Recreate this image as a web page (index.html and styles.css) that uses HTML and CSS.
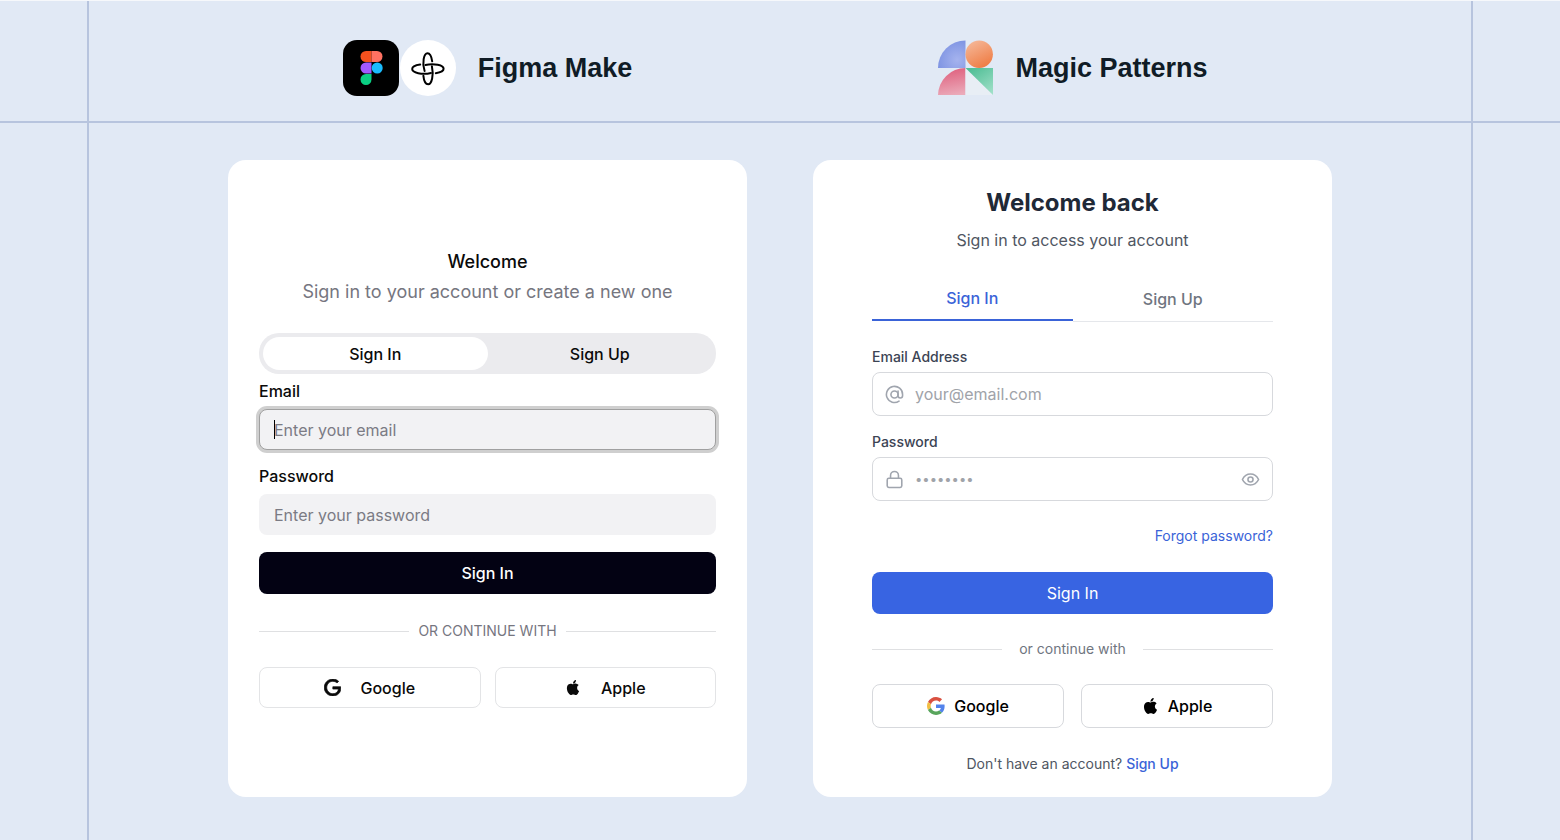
FILE: index.html
```html
<!DOCTYPE html>
<html lang="en">
<head>
<meta charset="utf-8">
<meta name="viewport" content="width=device-width, initial-scale=1">
<title>Figma Make and Magic Patterns</title>
<link rel="stylesheet" href="styles.css">
</head>
<body>
<svg class="sprite" aria-hidden="true">
  <symbol id="apple" viewBox="0 0 24 24"><path fill="currentColor" d="M12.152 6.896c-.948 0-2.415-1.078-3.96-1.04-2.04.027-3.91 1.183-4.961 3.014-2.117 3.675-.546 9.103 1.519 12.09 1.013 1.454 2.208 3.09 3.792 3.039 1.52-.065 2.09-.987 3.935-.987 1.831 0 2.35.987 3.96.948 1.637-.026 2.676-1.48 3.676-2.948 1.156-1.688 1.636-3.325 1.662-3.415-.039-.013-3.182-1.221-3.22-4.857-.026-3.04 2.48-4.494 2.597-4.559-1.429-2.09-3.623-2.324-4.39-2.376-2-.156-3.675 1.09-4.61 1.09zM15.53 3.83c.843-1.012 1.4-2.427 1.245-3.83-1.207.052-2.662.805-3.532 1.818-.78.896-1.454 2.338-1.273 3.714 1.338.104 2.715-.688 3.559-1.701"/></symbol>
</svg>
<header class="band band-top">
  <div class="band-inner">
    <div class="columns">
      <div class="brand">
        <div class="brand-pair">
          <svg class="brand-logo" viewBox="0 0 56 56" aria-hidden="true">
            <rect width="56" height="56" rx="14" fill="#000"/>
            <path d="M23 11h5.500v11H23a5.500 5.500 0 0 1 0-11z" fill="#f4511e"/>
            <path d="M28.500 11H34a5.500 5.500 0 0 1 0 11h-5.500z" fill="#ff7262"/>
            <path d="M23 22.500h5.500v11H23a5.500 5.500 0 0 1 0-11z" fill="#a259ff"/>
            <circle cx="34.200" cy="28" r="5.500" fill="#1abcfe"/>
            <path d="M23 34h5.500v5.500A5.500 5.500 0 1 1 23 34z" fill="#0acf83"/>
          </svg>
          <svg class="brand-logo" viewBox="0 0 56 56" aria-hidden="true">
            <circle cx="28" cy="28" r="28" fill="#fff"/>
            <g fill="none" stroke="#000" stroke-width="2" stroke-linecap="round">
              <path d="M24.600 31C21.800 23 23.900 13.300 27.500 13.300c2.300 0 4 3.400 4.700 8"/>
              <path d="M25.400 25C34 22.900 43.600 25.300 43.600 28.800c0 2.200-3 3.700-7.800 4.400"/>
              <path d="M31.900 26.200c1.900 8.600 0 18-3.800 18-2.400 0-4.200-3.500-4.700-8.400"/>
              <path d="M31 33C22 35.200 12.200 32.700 12.200 29c0-2.200 3.200-3.700 8-4.400"/>
            </g>
          </svg>
        </div>
        <h2 class="brand-name">Figma Make</h2>
      </div>
      <div class="brand">
        <svg class="brand-logo" viewBox="0 0 56 56" aria-hidden="true">
          <defs>
            <radialGradient id="mp-blue" cx=".7" cy=".7" r=".9"><stop offset="0" stop-color="#a5b3ee"/><stop offset="1" stop-color="#768de0"/></radialGradient>
            <linearGradient id="mp-orange" x1=".2" y1="0" x2=".7" y2="1"><stop offset="0" stop-color="#f5b899"/><stop offset="1" stop-color="#ef7b42"/></linearGradient>
            <linearGradient id="mp-red" x1=".5" y1="0" x2=".7" y2="1"><stop offset="0" stop-color="#df607e"/><stop offset="1" stop-color="#ebabba"/></linearGradient>
            <linearGradient id="mp-green" x1=".3" y1="0" x2="1" y2="1"><stop offset="0" stop-color="#52bf97"/><stop offset="1" stop-color="#a5e2cb"/></linearGradient>
          </defs>
          <path d="M1 28A27.500 27.500 0 0 1 28.500 .500v27.500z" fill="url(#mp-blue)"/>
          <circle cx="42.200" cy="14.200" r="13.700" fill="url(#mp-orange)"/>
          <path d="M1 55a27.500 27.500 0 0 1 27.500-27V55z" fill="url(#mp-red)"/>
          <path d="M28.500 28v27H56z" fill="#e8eef5"/>
          <path d="M28.500 28H56v27z" fill="url(#mp-green)"/>
        </svg>
        <h2 class="brand-name">Magic Patterns</h2>
      </div>
    </div>
  </div>
</header>
<main class="band band-main">
  <div class="band-inner">
    <div class="columns">
      <section class="card figma">
        <h1 class="title">Welcome</h1>
        <p class="subtitle">Sign in to your account or create a new one</p>
        <div class="tabs">
          <button type="button" class="tab active">Sign In</button>
          <button type="button" class="tab">Sign Up</button>
        </div>
        <form>
          <div class="group">
            <label for="f-email">Email</label>
            <div class="field"><input id="f-email" class="focused" type="email" placeholder="Enter your email"><span class="caret"></span></div>
          </div>
          <div class="group">
            <label for="f-pass">Password</label>
            <div class="field"><input id="f-pass" type="password" placeholder="Enter your password"></div>
          </div>
          <button type="button" class="submit">Sign In</button>
        </form>
        <div class="divider"><span>OR CONTINUE WITH</span></div>
        <div class="socials">
          <button type="button" class="social">
            <svg class="google" viewBox="0 0 24 24" aria-hidden="true"><path fill="#0a0a0a" d="M12.480 10.920v3.280h7.840c-.240 1.840-.853 3.187-1.787 4.133-1.147 1.147-2.933 2.400-6.053 2.400-4.827 0-8.600-3.893-8.600-8.720s3.773-8.720 8.600-8.720c2.600 0 4.507 1.027 5.907 2.347l2.307-2.307C18.747 1.440 16.133 0 12.480 0 5.867 0 .307 5.387.307 12s5.560 12 12.173 12c3.573 0 6.267-1.173 8.373-3.360 2.160-2.160 2.840-5.213 2.840-7.667 0-.760-.053-1.467-.173-2.053z" stroke="#0a0a0a"/></svg>
            Google
          </button>
          <button type="button" class="social"><svg class="apple" aria-hidden="true"><use href="#apple"/></svg>Apple</button>
        </div>
      </section>

      <section class="card magic">
        <h1 class="title">Welcome back</h1>
        <p class="subtitle">Sign in to access your account</p>
        <div class="tabs">
          <button type="button" class="tab active">Sign In</button>
          <button type="button" class="tab">Sign Up</button>
        </div>
        <form>
          <div class="group">
            <label for="m-email">Email Address</label>
            <div class="field">
              <svg class="icon" viewBox="0 0 24 24" aria-hidden="true"><circle cx="12" cy="12" r="4.500"/><path d="M16.500 7.500v6a2.700 2.700 0 0 0 5.700 0V12a10.200 10.200 0 1 0-4.500 8.400"/></svg>
              <input id="m-email" type="email" placeholder="your@email.com">
            </div>
          </div>
          <div class="group">
            <label for="m-pass">Password</label>
            <div class="field">
              <svg class="icon" viewBox="0 0 24 24" aria-hidden="true"><rect x="2.800" y="10.500" width="18.400" height="11.500" rx="2"/><path d="M7 10.500V6.800a5 5 0 0 1 10 0v3.700"/></svg>
              <input id="m-pass" class="dots" type="password" placeholder="••••••••">
              <button type="button" class="reveal" aria-label="Show password"><svg class="icon" viewBox="0 0 24 24" aria-hidden="true"><path d="M1.800 12C4 7.500 7.700 5 12 5s8 2.500 10.200 7c-2.200 4.500-5.900 7-10.200 7s-8-2.500-10.200-7z"/><circle cx="12" cy="12" r="3.200"/></svg></button>
            </div>
          </div>
          <a class="forgot" href="#">Forgot password?</a>
          <button type="button" class="submit">Sign In</button>
        </form>
        <div class="divider"><span>or continue with</span></div>
        <div class="socials">
          <button type="button" class="social">
            <svg class="google" viewBox="0 0 48 48" aria-hidden="true">
              <path fill="#d95040" d="M24 9.500c3.540 0 6.710 1.220 9.210 3.600l6.850-6.850C35.900 2.380 30.470 0 24 0 14.620 0 6.510 5.380 2.560 13.220l7.980 6.190C12.430 13.720 17.740 9.500 24 9.500z"/>
              <path fill="#5383ec" d="M46.980 24.550c0-1.570-.150-3.090-.380-4.550H24v9.020h12.940c-.580 2.960-2.260 5.480-4.780 7.180l7.730 6c4.510-4.180 7.090-10.360 7.090-17.650z"/>
              <path fill="#f2be42" d="M10.530 28.590c-.480-1.450-.760-2.990-.760-4.590s.270-3.140.760-4.590l-7.980-6.190C.920 16.460 0 20.120 0 24s.920 7.540 2.560 10.780l7.970-6.190z"/>
              <path fill="#58a55c" d="M24 48c6.480 0 11.930-2.130 15.890-5.810l-7.730-6c-2.150 1.450-4.920 2.300-8.160 2.300-6.260 0-11.570-4.220-13.470-9.910l-7.980 6.190C6.510 42.620 14.620 48 24 48z"/>
            </svg>
            Google
          </button>
          <button type="button" class="social"><svg class="apple" aria-hidden="true"><use href="#apple"/></svg>Apple</button>
        </div>
        <p class="foot">Don't have an account? <a href="#">Sign Up</a></p>
      </section>
    </div>
  </div>
</main>
</body>
</html>
```
FILE: styles.css
```css
* { box-sizing: border-box; }

body {
  margin: 0;
  min-height: 100vh;
  display: flex;
  flex-direction: column;
  border-top: 1px solid #f6f8fb;
  background: #e1e9f5;
  font-family: Inter, "Liberation Sans", sans-serif;
  font-size: 16px;
  line-height: 20px;
  color: #0a0a0a;
}

h1, h2, p { margin: 0; }
a { color: #3a63d8; text-decoration: none; }
button, input { font: inherit; color: inherit; }
button { padding: 0; border: 0; background: none; cursor: pointer; }
.sprite { display: none; }

/* Page bands with guide lines */
.band { padding: 0 87px; display: flex; }
.band-top { border-bottom: 2px solid #b7c4de; }
.band-main { flex: 1; }
.band-inner {
  flex: 1;
  display: flex;
  justify-content: center;
  border: solid #b7c4de;
  border-width: 0 2px;
  padding: 0 24px;
}
.band-top .band-inner { padding-top: 39px; padding-bottom: 25px; }
.band-main .band-inner { padding-top: 37px; padding-bottom: 43px; }
.columns {
  flex: 1;
  max-width: 1104px;
  display: grid;
  grid-template-columns: 1fr 1fr;
  gap: 66px;
}

.brand { display: flex; align-items: center; justify-content: center; gap: 22px; }
.brand-pair { display: flex; gap: 1px; }
.brand-logo { width: 56px; height: 56px; }
.brand-name {
  font: bold 27px/32px "Liberation Sans", Arial, sans-serif;
  color: #101c26;
}

/* Shared card parts */
.card {
  display: flex;
  flex-direction: column;
  border-radius: 18px;
  background: #fff;
}
.title, .subtitle { text-align: center; }
.tabs { display: grid; grid-template-columns: 1fr 1fr; }
.tab, label, .social { font-weight: 500; }
.group { display: flex; flex-direction: column; }
.field { position: relative; display: flex; align-items: center; }
.field input { flex: 1; min-width: 0; height: 100%; padding: 0; border: 0; outline: 0; background: none; }
.submit { width: 100%; border-radius: 8px; color: #fff; font-weight: 500; }
.divider { display: flex; align-items: center; }
.divider::before, .divider::after { content: ""; flex: 1; height: 1px; background: #dfe0e2; }
.socials { display: grid; grid-template-columns: 1fr 1fr; }
.social { display: flex; align-items: center; justify-content: center; border: 1px solid #e3e4e6; border-radius: 8px; }

/* Left card */
.figma { justify-content: center; padding: 2px 31px 0; }
.figma .title { font-size: 18px; line-height: 22px; font-weight: 500; }
.figma .subtitle { margin-top: 7px; font-size: 18px; line-height: 24px; color: #76767f; }
.figma .tabs { margin: 29px 0 7px; height: 41px; padding: 4px; border-radius: 20px; background: #ebebee; }
.figma .tab { border-radius: 17px; }
.figma .tab.active { background: #fff; }
.figma .group { gap: 8px; margin-bottom: 17px; }
.figma .group:first-child { margin-bottom: 16px; }
.figma .field { height: 41px; }
.figma .field input { padding: 0 15px; border-radius: 8px; background: #f2f2f4; }
.figma .field .focused { border: 1px solid #a0a0a0; padding: 0 14px; box-shadow: 0 0 0 3px #cfcfcf; }
.figma input::placeholder { color: #7b7b84; opacity: 1; }
.caret { position: absolute; left: 15px; top: 11px; width: 1px; height: 19px; background: #000; }
.figma .submit { height: 42px; background: #030213; }
.figma .divider { gap: 9px; margin: 27px 0 26px; font-size: 14px; color: #76767f; }
.figma .socials { gap: 14px; }
.figma .social { height: 41px; gap: 19px; }
.figma .google { width: 17px; height: 17px; }
.figma .apple { width: 16px; height: 15px; margin-right: 1px; }

/* Right card */
.magic { padding: 27px 59px 23px; }
.magic .title { font-size: 24px; line-height: 32px; font-weight: 700; color: #1f2937; }
.magic .subtitle { margin-top: 9px; line-height: 24px; color: #4f5662; }
.magic .tabs { margin: 25px 0; height: 45px; }
.magic .tab { border-bottom: 1px solid #e5e7eb; color: #6f7580; }
.magic .tab.active { margin-bottom: 1px; border-bottom: 2px solid #3a63d8; color: #3a63d8; }
.magic .group { gap: 5px; margin-bottom: 16px; }
.magic label { font-size: 14px; color: #3c4454; }
.magic .field { height: 44px; padding: 0 12px; gap: 11px; border: 1px solid #d7d9dd; border-radius: 8px; }
.magic input::placeholder { color: #a0a3a9; opacity: 1; }
.magic .dots { font-size: 13px; }
.icon { flex: none; width: 19px; height: 19px; fill: none; stroke: #a0a5ae; stroke-width: 2; stroke-linecap: round; stroke-linejoin: round; }
.reveal { display: flex; }
.magic form { display: flex; flex-direction: column; }
.forgot { align-self: flex-end; margin: 9px 0 26px; font-size: 14px; }
.magic .submit { height: 42px; background: #3864e2; font-weight: 400; }
.magic .divider { gap: 17px; margin: 25px 0; font-size: 14px; color: #6f7580; }
.magic .socials { gap: 17px; }
.magic .social { height: 44px; gap: 9px; border-color: #d7d9dd; color: #000; }
.magic .google { width: 18px; height: 18px; }
.magic .apple { width: 17px; height: 16px; }
.foot { margin-top: 26px; text-align: center; font-size: 14px; color: #4f5662; }
.foot a { font-weight: 500; }

@media (max-width: 900px) {
  .band { padding: 0 12px; }
  .columns { grid-template-columns: 1fr; }
}
```
